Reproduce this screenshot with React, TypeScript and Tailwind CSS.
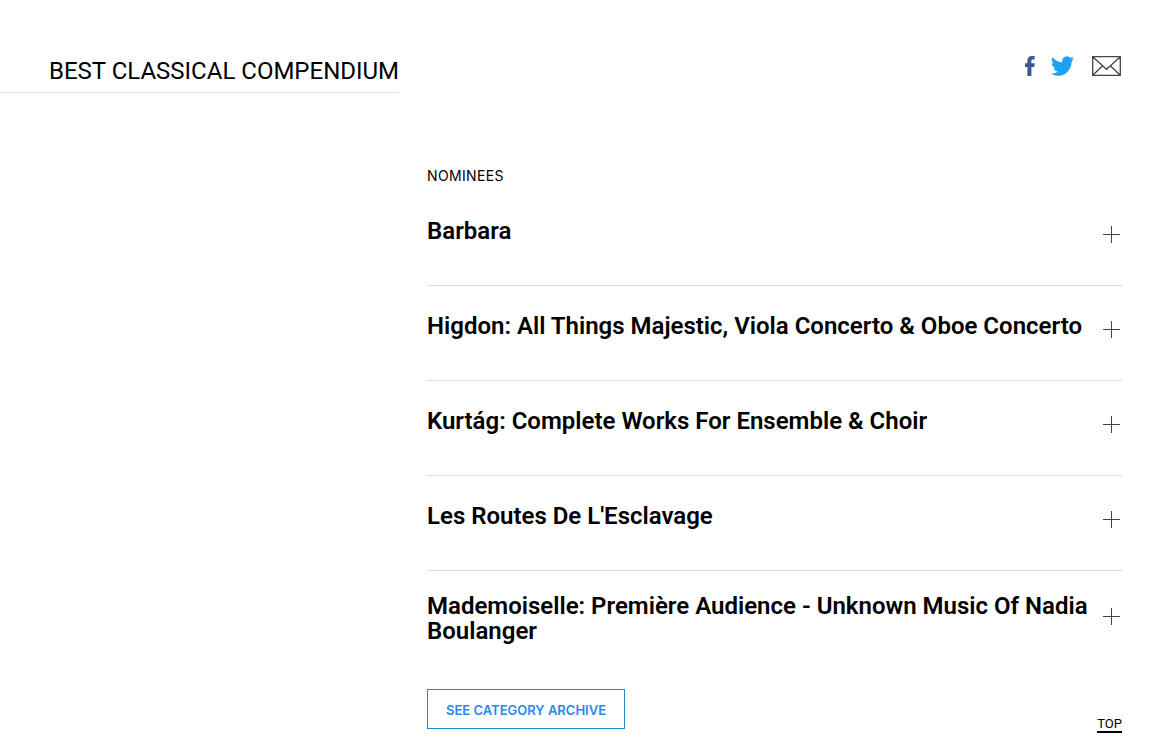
import React, { useState } from 'react';

const nominees = [
  { title: "Barbara" },
  { title: "Higdon: All Things Majestic, Viola Concerto & Oboe Concerto" },
  { title: "Kurtág: Complete Works For Ensemble & Choir" },
  { title: "Les Routes De L'Esclavage" },
  { title: "Mademoiselle: Première Audience - Unknown Music Of Nadia Boulanger", long: true },
];

const PlusIcon: React.FC<{ open: boolean }> = ({ open }) => (
  <svg width="17" height="17" viewBox="0 0 17 17" stroke="#444" fill="none" aria-hidden="true">
    <path d={open ? "M0 8.5H17" : "M0 8.5H17M8.5 0V17"} />
  </svg>
);

const ShareLinks: React.FC = () => (
  <div className="flex items-center">
    <a href="#facebook" aria-label="Share on Facebook" className="mr-4">
      <svg width="10" height="20" viewBox="0 0 10 20" fill="#3b5998">
        <path d="M2.4 20V10.9H0V7.3H2.4V4.6C2.4 1.6 4 0 6.8 0H9.7V3.5H7.9C6.7 3.5 6.4 4 6.4 5.1V7.3H9.7L9.3 10.9H6.4V20Z" />
      </svg>
    </a>
    <a href="#twitter" aria-label="Share on Twitter" className="mr-[18px]">
      <svg width="23" height="20" viewBox="0 2 24 20" preserveAspectRatio="none" fill="#1da1f2">
        <path d="M23.95 4.57a10 10 0 0 1-2.82.77 4.96 4.96 0 0 0 2.16-2.72c-.95.55-2 .95-3.13 1.18a4.92 4.92 0 0 0-8.38 4.48C7.69 8.09 4.07 6.13 1.64 3.16a4.92 4.92 0 0 0 1.52 6.57 4.9 4.9 0 0 1-2.23-.61v.06a4.92 4.92 0 0 0 3.95 4.83 5 5 0 0 1-2.21.08 4.94 4.94 0 0 0 4.6 3.42A9.87 9.87 0 0 1 0 19.54a14 14 0 0 0 7.55 2.21c9.05 0 14-7.5 14-13.98 0-.21 0-.42-.02-.63a9.94 9.94 0 0 0 2.46-2.55z" />
      </svg>
    </a>
    <a href="#email" aria-label="Share by email">
      <svg width="29" height="20" viewBox="0 0 29 20" fill="none" stroke="#444" strokeWidth="1.3">
        <path d="M.7.7H28.3V19.3H.7ZM1 1L10.6 9.8L14.5 13.3L18.4 9.8L28 1M1 19L10.6 9.8M28 19L18.4 9.8" />
      </svg>
    </a>
  </div>
);

const App: React.FC = () => {
  const [openIdx, setOpenIdx] = useState<number | null>(null);

  return (
    <div className="bg-white pb-1 font-['Roboto',sans-serif] text-black">
      <header className="flex items-start justify-between pr-9">
        <h1 className="border-b border-[#ddd] pt-14 pb-1.5 pl-[49px] text-2xl leading-[30px] uppercase">
          Best Classical Compendium
        </h1>
        <div className="pt-14">
          <ShareLinks />
        </div>
      </header>

      <div className="grid grid-cols-[427px_minmax(0,1fr)] pt-[73px] pr-[35px]">
        <main className="col-start-2">
          <h2 className="font-['Inter',sans-serif] text-sm leading-5 tracking-wide uppercase">Nominees</h2>

          {/* nominee rows */}
          <ul className="mt-[5px]">
            {nominees.map((nominee, idx) => (
              <li
                key={idx}
                className={nominee.long ? "flex items-start justify-between pt-[23px] pb-[45px]" : "flex items-start justify-between border-b border-[#ddd] pt-7 pb-[35px]"}
              >
                <h3 className="max-w-[668px] text-2xl leading-[25px] font-semibold">{nominee.title}</h3>
                <button
                  type="button"
                  aria-label={`Details for ${nominee.title}`}
                  aria-expanded={openIdx === idx}
                  onClick={() => setOpenIdx(openIdx === idx ? null : idx)}
                  className={nominee.long ? "mr-0.5 flex h-[45px] items-center" : "mr-0.5 flex h-[31px] items-center"}
                >
                  <PlusIcon open={openIdx === idx} />
                </button>
              </li>
            ))}
          </ul>

          <div className="flex items-start justify-between">
            <a
              href="#archive"
              className="border border-[#2a87c8] px-[18px] pt-0.5 font-['Inter',sans-serif] text-[13px] leading-9 font-semibold text-[#2c87f0] uppercase"
            >
              See Category Archive
            </a>
            <a href="#top" className="mt-7 border-b-2 border-black text-[13px] leading-[14px] uppercase">Top</a>
          </div>
        </main>
      </div>
    </div>
  );
};

export default App;
